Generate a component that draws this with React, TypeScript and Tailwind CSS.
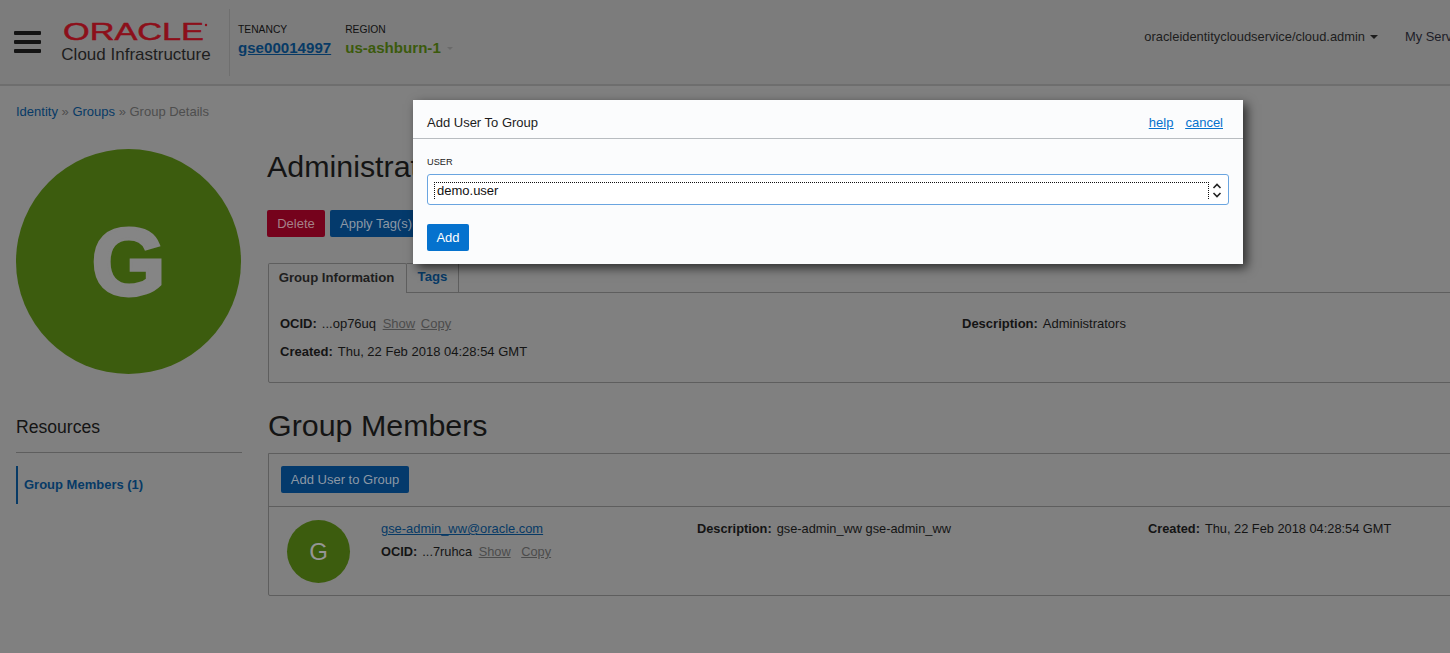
const sans = "font-['Liberation_Sans',Arial,sans-serif]";

function Hamburger() {
  return (
    <div className="flex w-[27px] flex-col gap-[5px]">
      <div className="h-1 rounded-[1px] bg-[#141414]" />
      <div className="h-1 rounded-[1px] bg-[#141414]" />
      <div className="h-1 rounded-[1px] bg-[#141414]" />
    </div>
  );
}

function Logo() {
  return (
    <div className="ml-[19px] flex w-[152px] flex-col items-center">
      <svg width="146" height="21" viewBox="0 0 146 21" className="mt-[1px]">
        <text
          x="0"
          y="18"
          textLength="141"
          lengthAdjust="spacingAndGlyphs"
          fontFamily="'Liberation Sans', Arial, sans-serif"
          fontSize="24"
          fill="#8c0f1a"
          stroke="#8c0f1a"
          strokeWidth="0.5"
        >
          ORACLE
        </text>
        <circle cx="143" cy="3" r="1.2" fill="#8c0f1a" />
      </svg>
      <div className="mt-[2px] whitespace-nowrap text-[17px] leading-[19px] text-[#1e1e1e]">Cloud Infrastructure</div>
    </div>
  );
}

function Header() {
  return (
    <header className="flex h-[86px] items-center border-b-2 border-[#6e6e6e] bg-[#7c7c7c] pl-[14px]">
      <Hamburger />
      <Logo />
      <div className="ml-[17px] h-[67px] w-px bg-[#6f6f6f]" />
      <div className="ml-[8px] mt-[-2px]">
        <div className="-mt-[2px] mb-[2px] text-[10.3px] leading-3 text-[#111]">TENANCY</div>
        <a className="block text-[15.1px] font-bold leading-[19px] text-[#073a66] underline">gse00014997</a>
      </div>
      <div className="ml-[14px] mt-[-2px]">
        <div className="-mt-[2px] mb-[2px] text-[10.3px] leading-3 text-[#111]">REGION</div>
        <div className="flex items-center text-[15.1px] font-bold leading-[19px] text-[#3b5a0c]">
          us-ashburn-1
          <span className="ml-[6px] mt-[3px] h-0 w-0 border-x-[3px] border-t-[3px] border-x-transparent border-t-[#6a6a6a]" />
        </div>
      </div>
      <div className="ml-auto mb-[10px] flex items-center whitespace-nowrap text-[12.9px] text-[#1d1d1d]">
        oracleidentitycloudservice/cloud.admin
        <span className="ml-[5px] h-0 w-0 border-x-4 border-t-4 border-x-transparent border-t-[#1d1d1d]" />
        <span className="ml-[27px] w-[45px] overflow-hidden text-[#1d1d28]">My Services</span>
      </div>
    </header>
  );
}

function Sidebar() {
  return (
    <aside className="w-[226px] shrink-0">
      <div className="text-[13px] leading-[15px] text-[#4e4e4e]">
        <a className="text-[#073a66]">Identity</a> » <a className="text-[#073a66]">Groups</a> » Group Details
      </div>
      <div className="mt-[30px] flex h-[225px] w-[225px] items-center justify-center rounded-full bg-[#3c5c0e] text-[96px] font-bold text-[#858585] [-webkit-text-stroke:3px_#858585]">
        G
      </div>
      <div className="mt-[42px] border-b border-[#5e5e5e] pb-[14px] text-[17.6px] leading-[22px] text-[#141414]">Resources</div>
      <div className="mt-[13px] flex h-[38px] items-center border-l-2 border-[#073a66] pl-[6px] text-[13px] font-bold text-[#073a66]">
        Group Members (1)
      </div>
    </aside>
  );
}

function Field({ label, children }: { label: string; children: React.ReactNode }) {
  return (
    <div className="whitespace-nowrap leading-[16px] text-[#141414]">
      <b className="mr-[5px]">{label}</b>
      {children}
    </div>
  );
}

function Main() {
  return (
    <main className="ml-[26px] w-[1300px] shrink-0 pt-[45px]">
      <h1 className="-ml-px h-[36px] text-[30.4px] leading-[34px] text-[#141414]">Administrators</h1>
      <div className="-ml-px mt-[25px] flex gap-[5px] text-[13px]">
        <button className="h-[27px] w-[58px] rounded-[2px] bg-[#75021c] text-[#a58088]">Delete</button>
        <button className="h-[27px] rounded-[2px] bg-[#043a6c] px-[10px] text-[#8c98a5]">Apply Tag(s)</button>
      </div>
      <div className="mt-[26px] flex h-[30px] text-[13.2px] font-bold">
        <div className="z-10 flex h-[30px] w-[139px] items-center justify-center rounded-t-[2px] border border-b-0 border-[#5e5e5e] bg-[#808080] pb-[2px] pr-[2px] text-[#1e1e1e]">
          Group Information
        </div>
        <div className="flex h-[29px] w-[52px] items-center justify-center border border-b-0 border-l-0 border-[#5e5e5e] pb-[2px] text-[#073a66]">
          Tags
        </div>
      </div>
      <div className="-mt-px h-[91px] rounded-bl-[2px] border border-[#5e5e5e] px-[11px] pt-[23px] text-[13px]">
        <div className="flex">
          <div className="w-[682px]">
            <Field label="OCID:">
              ...op76uq <a className="ml-[3px] text-[#4c4c4c] underline">Show</a>{" "}
              <a className="ml-[2px] text-[#4c4c4c] underline">Copy</a>
            </Field>
            <div className="mt-3">
              <Field label="Created:">Thu, 22 Feb 2018 04:28:54 GMT</Field>
            </div>
          </div>
          <Field label="Description:">Administrators</Field>
        </div>
      </div>
      <h2 className="mt-[25px] h-[36px] text-[30.4px] leading-[34px] text-[#141414]">Group Members</h2>
      <div className="mt-[9px] h-[143px] rounded-bl-[2px] border border-[#5e5e5e]">
        <div className="h-[53px] border-b border-[#5e5e5e] px-3 pt-3">
          <button className="h-[27px] w-[128px] rounded-[2px] bg-[#043a6c] text-[13px] text-[#8c98a5]">Add User to Group</button>
        </div>
        <div className="flex pl-[18px] pt-[13px] text-[12.8px]">
          <div className="flex h-[63px] w-[63px] items-center justify-center rounded-full bg-[#3c5c0e] text-[24px] text-[#959595]">
            G
          </div>
          <div className="ml-[31px] w-[316px] text-[#141414]">
            <a className="mt-[1px] block text-[12.9px] leading-[16px] text-[#073a66] underline">gse-admin_ww@oracle.com</a>
            <div className="mt-[7px]">
              <Field label="OCID:">
                ...7ruhca <a className="ml-[3px] text-[#4c4c4c] underline">Show</a>{" "}
                <a className="ml-[7px] text-[#4c4c4c] underline">Copy</a>
              </Field>
            </div>
          </div>
          <div className="mt-[1px] w-[451px]">
            <Field label="Description:">gse-admin_ww gse-admin_ww</Field>
          </div>
          <div className="mt-[1px]">
            <Field label="Created:">Thu, 22 Feb 2018 04:28:54 GMT</Field>
          </div>
        </div>
      </div>
    </main>
  );
}

function AddUserDialog() {
  return (
    <div className="absolute left-[413px] top-[100px] h-[164px] w-[830px] bg-[#fbfcfd] shadow-[4px_4px_10px_rgba(0,0,0,0.65)]">
      <div className="flex h-[39px] items-center justify-between border-b border-[#b8bcc0] pl-[14px] pr-5 pt-[8px] text-[13px]">
        <span className="text-[#1c1c1c]">Add User To Group</span>
        <div className="flex gap-3 text-[#0572ce] underline">
          <a>help</a>
          <a>cancel</a>
        </div>
      </div>
      <div className="px-[14px] pt-[18px]">
        <div className="text-[9.2px] leading-[11px] text-[#222]">USER</div>
        <div className="mt-[6px] flex h-[31px] w-[802px] items-start rounded-[3px] border border-[#6aa5e0] bg-white pl-[6px] pr-[5px] pt-[7px]">
          <div className="flex h-[17px] flex-1 items-center border border-b-0 border-dotted border-[#111] pl-[2px] text-[13px] text-[#111]">
            demo.user
          </div>
          <svg width="12" height="19" viewBox="0 0 12 19" fill="none" stroke="#222" strokeWidth="1.6" className="ml-[2px] -mt-[1px]">
            <path d="M2.5 7 6 3.5 9.5 7" />
            <path d="M2.5 12 6 15.5 9.5 12" />
          </svg>
        </div>
        <button className="mt-[19px] h-[27px] w-[42px] rounded-[2px] bg-[#0572ce] text-[13px] text-white">Add</button>
      </div>
    </div>
  );
}

export default function App() {
  return (
    <div className={`relative h-[653px] w-[1450px] overflow-hidden bg-[#808080] ${sans}`}>
      <Header />
      <div className="flex pl-4 pt-[18px]">
        <Sidebar />
        <Main />
      </div>
      <AddUserDialog />
    </div>
  );
}
